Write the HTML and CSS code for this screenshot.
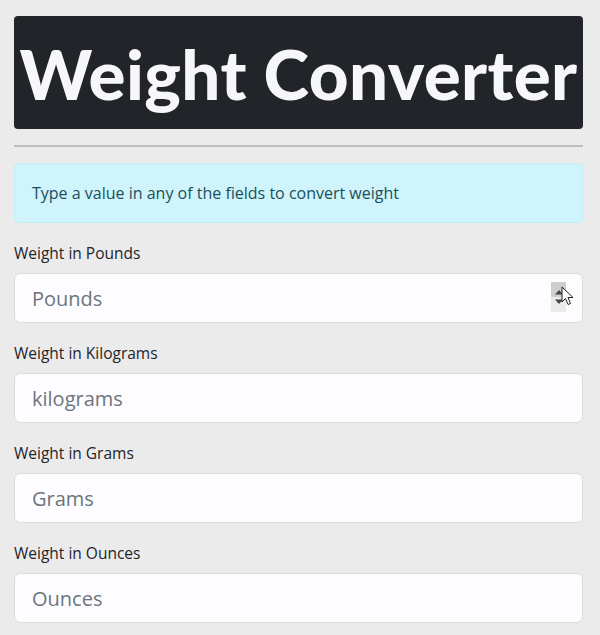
FILE: index.html
```html
<!DOCTYPE html>
<html>
<head>
<meta charset="utf-8">
<link rel="stylesheet" href="styles.css">
</head>
<body>
<div class="container">
  <header class="banner"><h1 class="title">Weight Converter</h1></header>
  <hr class="rule">
  <div class="alert">Type a value in any of the fields to convert weight</div>
  <form class="fields">
    <div class="group">
      <label class="label" for="lbs">Weight in Pounds</label>
      <div class="input-wrap">
        <input class="input" id="lbs" type="text" placeholder="Pounds">
        <span class="spinner">
          <span class="spin-up"><svg width="10" height="6" viewBox="0 0 10 6"><path d="M1 5.5 L5 1 L9 5.5 Z" fill="#444"/></svg></span>
          <span class="spin-down"><svg width="10" height="6" viewBox="0 0 10 6"><path d="M1 0.5 L5 5 L9 0.5 Z" fill="#444"/></svg></span>
        </span>
        <svg class="cursor" width="14" height="21" viewBox="0 0 14 21"><path d="M1 1 L1 16 L4.5 12.5 L7 18.5 L9.5 17.5 L7 11.5 L12 11.5 Z" fill="#fff" stroke="#222" stroke-width="1" stroke-linejoin="round"/></svg>
      </div>
    </div>
    <div class="group">
      <label class="label" for="kg">Weight in Kilograms</label>
      <div class="input-wrap"><input class="input" id="kg" type="text" placeholder="kilograms"></div>
    </div>
    <div class="group">
      <label class="label" for="g">Weight in Grams</label>
      <div class="input-wrap"><input class="input" id="g" type="text" placeholder="Grams"></div>
    </div>
    <div class="group">
      <label class="label" for="oz">Weight in Ounces</label>
      <div class="input-wrap"><input class="input" id="oz" type="text" placeholder="Ounces"></div>
    </div>
  </form>
</div>
</body>
</html>
```

FILE: styles.css
```css
html, body {
  margin: 0;
  padding: 0;
  background: #ecebec;
  font-family: "Open Sans", "Noto Sans", sans-serif;
  color: #212529;
}
.container {
  padding: 16px 17px 0 14px;
}
.banner {
  background: #212529;
  border-radius: 4px;
  height: 113px;
  display: flex;
  align-items: center;
  justify-content: center;
  overflow: hidden;
}
.title {
  margin: 0;
  color: #f7f6f8;
  font-family: Lato, "Open Sans", sans-serif;
  font-size: 69px;
  font-weight: 900;
  line-height: 1;
  letter-spacing: 0.4px;
  white-space: nowrap;
  position: relative;
  top: 1px;
}
.rule {
  border: 0;
  border-top: 2px solid #bdbcbe;
  margin: 16px 0 16px;
}
.alert {
  background: #cff4fc;
  border: 1px solid #c3eef7;
  border-radius: 4px;
  color: #1a4f5a;
  font-size: 16px;
  line-height: 24px;
  padding: 17px 17px;
}
.fields {
  margin-top: 18px;
}
.group {
  margin-bottom: 18px;
}
.label {
  display: block;
  font-size: 15.5px;
  line-height: 24px;
  margin-bottom: 8px;
  color: #212529;
}
.input-wrap {
  position: relative;
}
.input {
  display: block;
  box-sizing: border-box;
  width: 100%;
  height: 50px;
  border: 1px solid #dcdbdd;
  border-radius: 6px;
  background: #fdfcfe;
  font-family: inherit;
  font-size: 20px;
  padding: 0 17px;
  color: #495057;
  outline: none;
}
.input::placeholder {
  color: #6c757d;
  opacity: 1;
}
.spinner {
  position: absolute;
  right: 17px;
  top: 9px;
  width: 15px;
  height: 30px;
  display: flex;
  flex-direction: column;
}
.spin-up {
  flex: 1;
  background: #cfcecf;
  display: flex;
  align-items: flex-end;
  justify-content: center;
  padding-bottom: 2px;
}
.spin-down {
  flex: 1;
  background: #ebeaeb;
  display: flex;
  align-items: flex-start;
  justify-content: center;
  padding-top: 2px;
}
.cursor {
  position: absolute;
  right: 8px;
  top: 13px;
}
```
